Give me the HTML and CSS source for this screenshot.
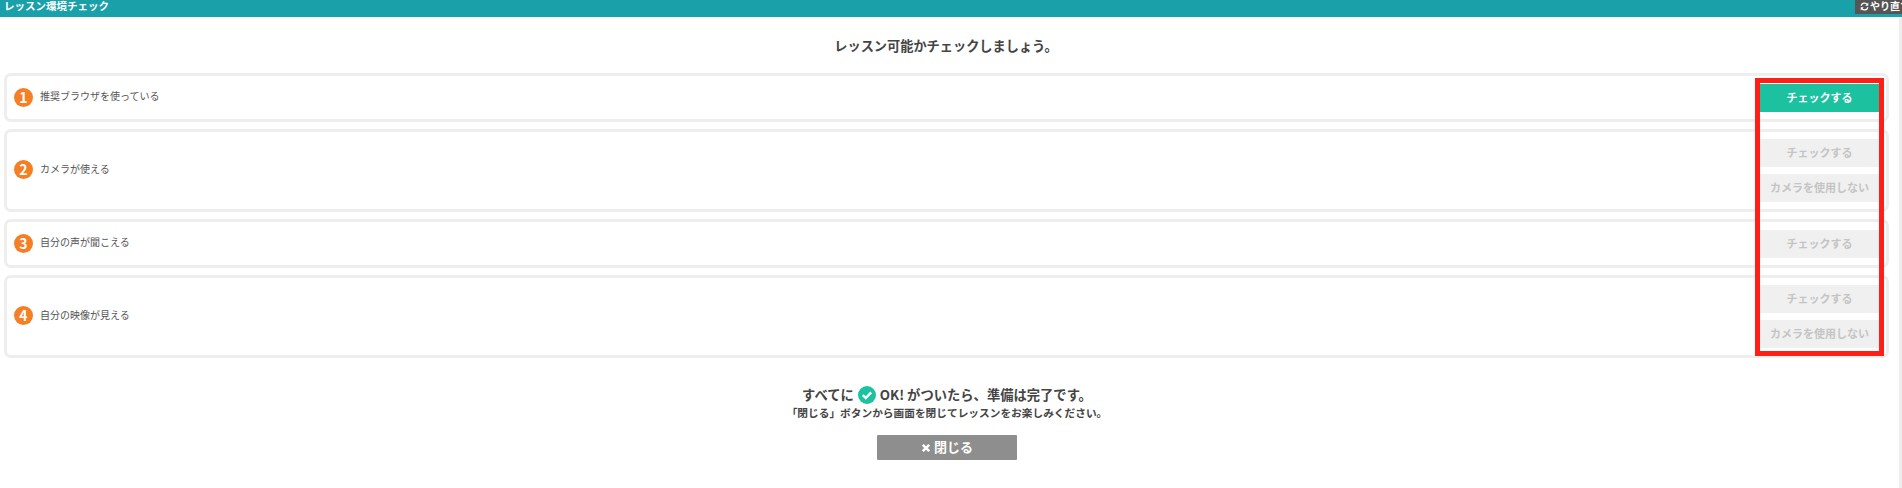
FILE: index.html
```html
<!DOCTYPE html>
<html lang="ja">
<head>
    <meta charset="UTF-8">
    <meta name="viewport" content="width=device-width, initial-scale=1.0">
    <title>レッスン環境チェック</title>
    <link rel="stylesheet" href="styles.css">
</head>
<body>
    <div class="header">
        <h1 class="header-title">レッスン環境チェック</h1>
        <button class="retry">
            <svg class="retry-icon" viewBox="0 0 12 12" aria-hidden="true">
                <path d="M1.5 5A4.6 4.6 0 0 1 9.6 3.2" />
                <path d="M10.5 7A4.6 4.6 0 0 1 2.4 8.8" />
                <path class="fill" d="M11 .8V5H7Z" />
                <path class="fill" d="M1 11.2V7H5Z" />
            </svg>やり直す
        </button>
    </div>

    <div class="content">
        <p class="lead">レッスン可能かチェックしましょう。</p>

        <div class="check-list">
            <div class="check-row">
                <span class="num">1</span>
                <span class="check-label">推奨ブラウザを使っている</span>
                <div class="actions">
                    <button class="btn active">チェックする</button>
                </div>
            </div>
            <div class="check-row two">
                <span class="num">2</span>
                <span class="check-label">カメラが使える</span>
                <div class="actions">
                    <button class="btn">チェックする</button>
                    <button class="btn">カメラを使用しない</button>
                </div>
            </div>
            <div class="check-row">
                <span class="num">3</span>
                <span class="check-label">自分の声が聞こえる</span>
                <div class="actions">
                    <button class="btn">チェックする</button>
                </div>
            </div>
            <div class="check-row two">
                <span class="num">4</span>
                <span class="check-label">自分の映像が見える</span>
                <div class="actions">
                    <button class="btn">チェックする</button>
                    <button class="btn">カメラを使用しない</button>
                </div>
            </div>
            <!-- 赤枠は注釈なので上に重ねる -->
            <div class="highlight"></div>
        </div>

        <div class="footer">
            <p class="done">すべてに
                <svg class="ok-icon" viewBox="0 0 18 18" aria-hidden="true">
                    <circle cx="9" cy="9" r="9" />
                    <path d="M4.8 9.2 7.8 12 13.2 6.4" />
                </svg>
                OK! がついたら、準備は完了です。</p>
            <p class="note">「閉じる」ボタンから画面を閉じてレッスンをお楽しみください。</p>
            <button class="close">
                <svg class="close-icon" viewBox="0 0 10 10" aria-hidden="true">
                    <path d="M1.8 1.8 8.2 8.2M8.2 1.8 1.8 8.2" />
                </svg>閉じる
            </button>
        </div>
    </div>
</body>
</html>
```

FILE: styles.css
```css
html, body{
    height: 100%;
}

body{
    margin: 0;
    overflow: hidden;
    background: white;
    color: #444;
    font-family: "Noto Sans CJK JP", "Noto Sans", sans-serif;
}

p{
    margin: 0;
}

button{
    font-family: inherit;
    border: 0;
    padding: 0;
}

.header{
    height: 17px;
    background: #1aa0a8;
    display: flex;
    justify-content: space-between;
    align-items: flex-start;
    overflow: hidden;
}

.header-title{
    margin: 0;
    padding-left: 4px;
    color: white;
    font-size: 10.5px;
    font-weight: 700;
    line-height: 11px;
}

.retry{
    width: 47px;
    height: 14px;
    flex-shrink: 0;
    background: #555;
    color: white;
    font-size: 10px;
    font-weight: 700;
    line-height: 12px;
    text-align: left;
    padding: 0 0 2px 5px;
    white-space: nowrap;
    overflow: hidden;
}

.retry-icon{
    width: 9px;
    height: 9px;
    margin-right: 1px;
    vertical-align: -1px;
    fill: none;
    stroke: white;
    stroke-width: 1.6;
}

.retry-icon .fill{
    fill: white;
    stroke: none;
}

.content{
    padding-right: 10px;
    border-right: 3px solid #eee;
    height: 471px;
    box-sizing: border-box;
}

.lead{
    padding: 19px 2px 0 5px;
    height: 56px;
    font-size: 13.2px;
    font-weight: 700;
    line-height: 20px;
    box-sizing: border-box;
    text-align: center;
}

.check-list{
    position: relative;
    margin-left: 4px;
    display: flex;
    flex-direction: column;
    gap: 7px;
}

.check-row{
    display: flex;
    align-items: center;
    padding: 8px 7px 7px;
    border: 3px solid #eee;
    border-radius: 7px;
}

.check-row.two{
    padding: 7px;
}

.num{
    width: 19px;
    height: 19px;
    margin-bottom: 2px;
    flex-shrink: 0;
    border-radius: 50%;
    background: #f47f24;
    color: white;
    font-size: 14px;
    font-weight: 700;
    line-height: 19px;
    text-align: center;
}

.check-label{
    margin: 0 0 5px 7px;
    flex: 1;
    font-size: 10px;
    color: #555;
}

.actions{
    width: 119px;
    display: flex;
    flex-direction: column;
    gap: 7px;
}

.btn{
    height: 28px;
    padding-bottom: 3px;
    background: #f0f0f0;
    color: #c4c4c4;
    font-size: 11px;
    font-weight: 700;
}

.btn.active{
    background: #1cc29f;
    color: white;
}

.highlight{
    position: absolute;
    top: 5px;
    right: 5px;
    width: 129px;
    height: 278px;
    box-sizing: border-box;
    border: 5px solid #ff1f17;
}

.footer{
    padding: 27px 0 0 5px;
    text-align: center;
}

.done{
    display: flex;
    justify-content: center;
    align-items: center;
    gap: 4px;
    height: 20px;
    font-size: 13.3px;
    font-weight: 700;
    line-height: 20px;
}

.ok-icon{
    width: 18px;
    height: 18px;
}

.ok-icon circle{
    fill: #1cc29f;
}

.ok-icon path{
    fill: none;
    stroke: white;
    stroke-width: 2.4;
}

.note{
    font-size: 10.7px;
    font-weight: 700;
    line-height: 16px;
}

.close{
    margin-top: 14px;
    width: 140px;
    height: 25px;
    padding-bottom: 2px;
    background: #8e8e8e;
    border-radius: 1px;
    color: white;
    font-size: 13px;
    font-weight: 700;
    line-height: 23px;
}

.close-icon{
    width: 10px;
    height: 10px;
    margin-right: 3px;
    vertical-align: -1px;
    fill: none;
    stroke: white;
    stroke-width: 2.6;
}
```
